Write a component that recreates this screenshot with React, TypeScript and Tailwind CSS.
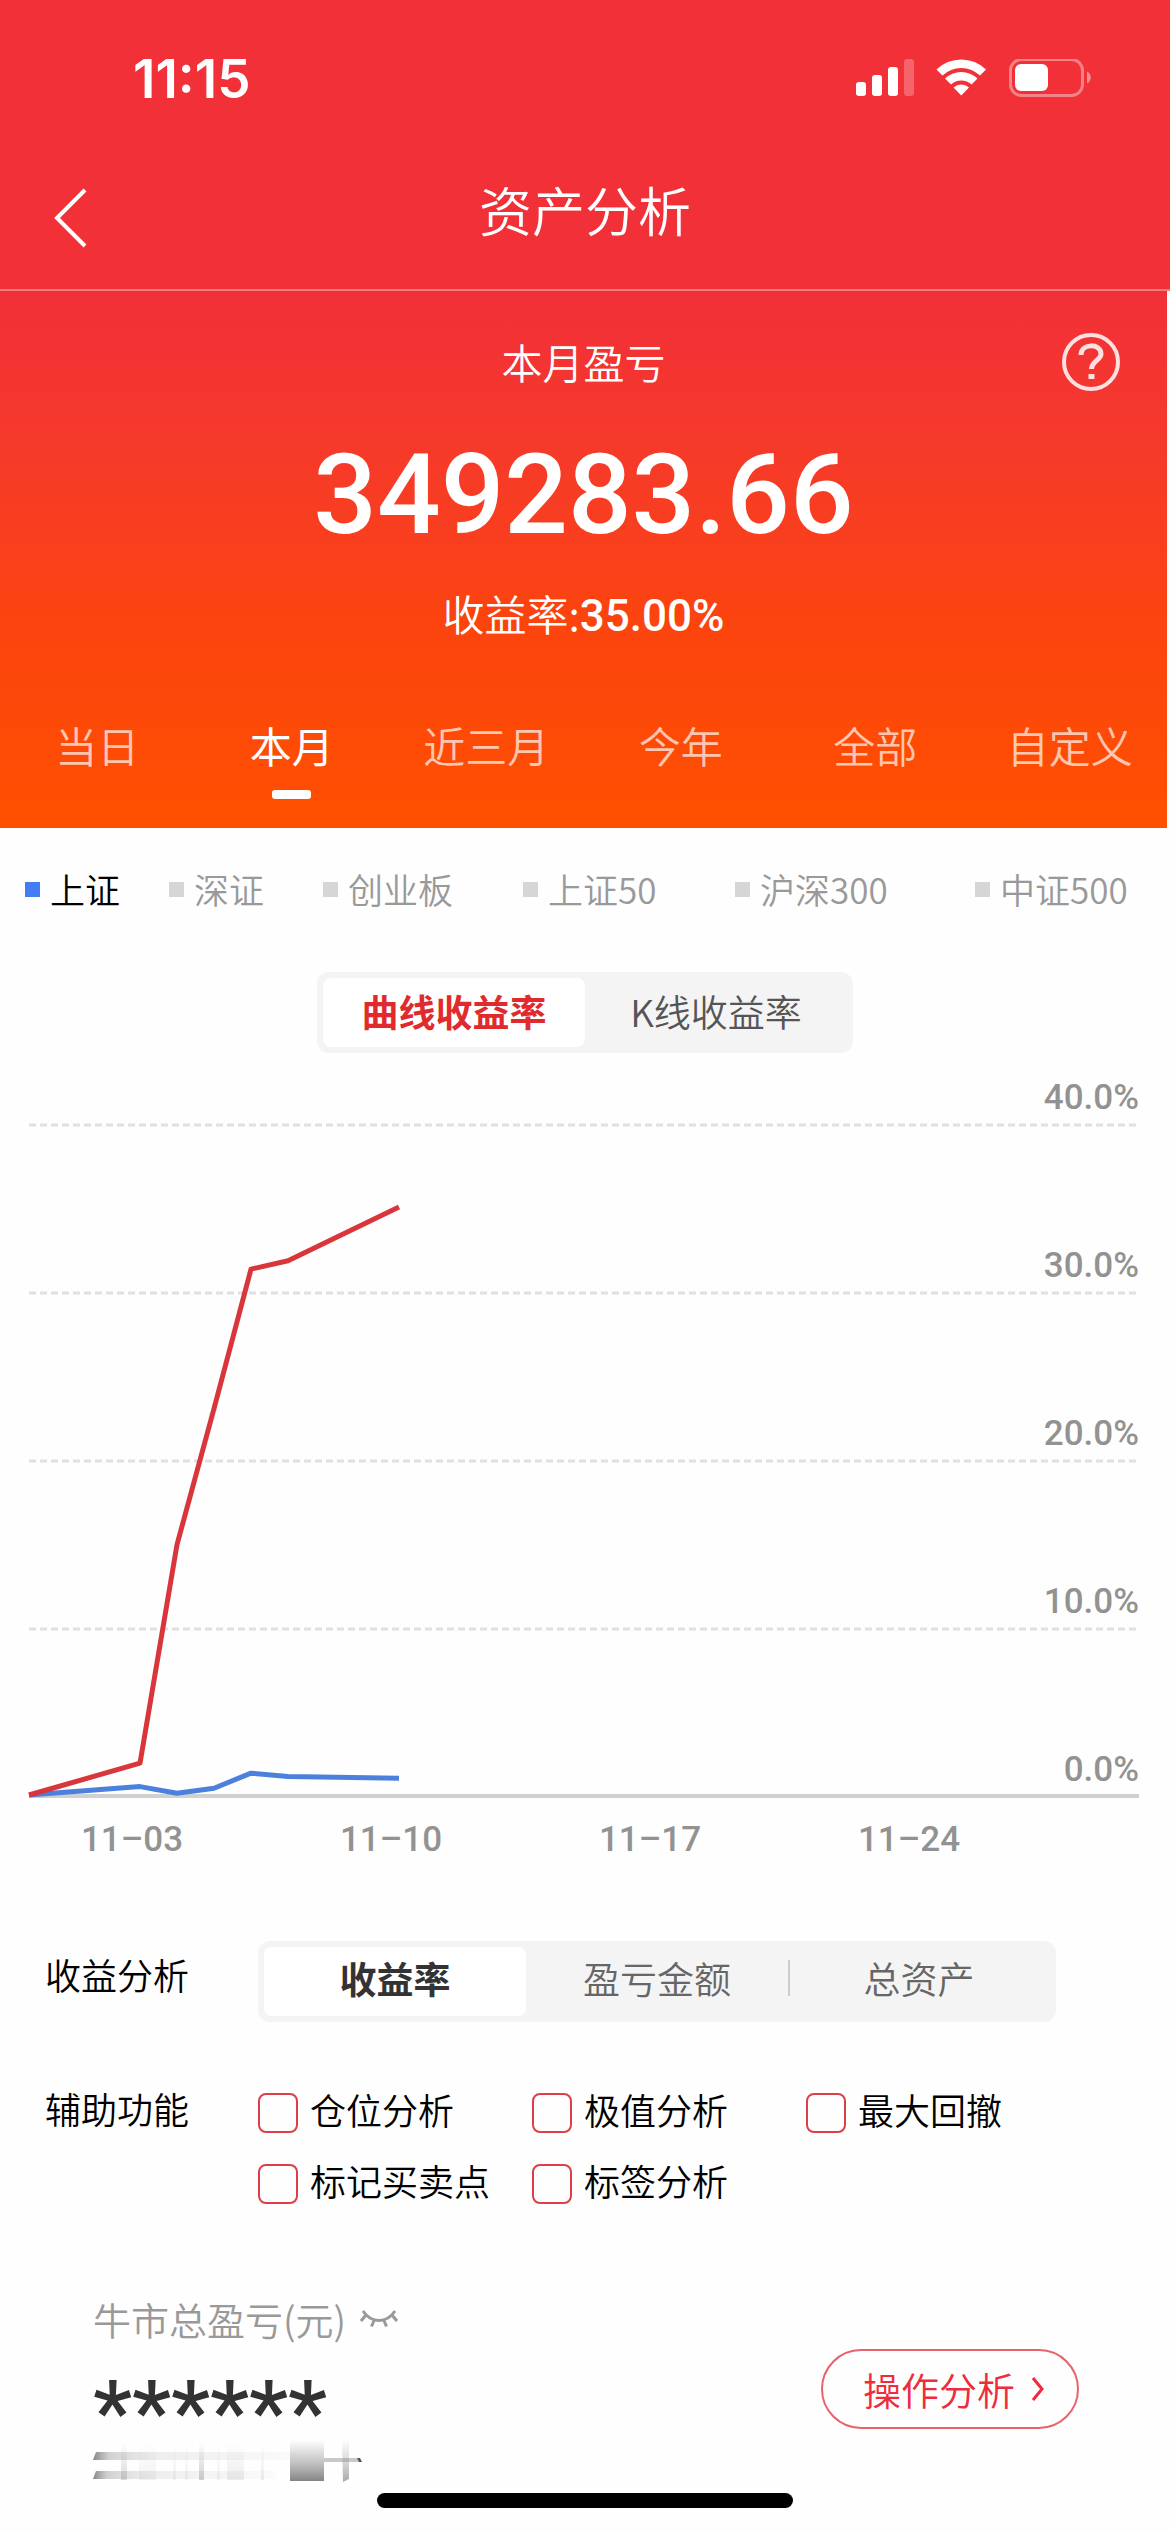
import { useState } from "react";

const PERIODS = ["当日", "本月", "近三月", "今年", "全部", "自定义"];
const INDEXES = ["上证", "深证", "创业板", "上证50", "沪深300", "中证500"];
const CURVE_MODES = ["曲线收益率", "K线收益率"];
const METRICS = ["收益率", "盈亏金额", "总资产"];
const HELPERS = ["仓位分析", "极值分析", "最大回撤", "标记买卖点", "标签分析"];

// [day of month, percent]
const PROFIT: [number, number][] = [[0, 0], [3, 1.9], [4, 14.9], [5, 23], [6, 31.3], [7, 31.8], [10, 35]];
const MARKET: [number, number][] = [[0, 0], [3, 0.5], [4, 0.1], [5, 0.4], [6, 1.3], [7, 1.1], [10, 1]];

const toX = (day: number) => 29 + day * 37;
const toY = (value: number) => 742 - value * 16.8;
const toPoints = (data: [number, number][]) => data.map(([d, v]) => `${toX(d)},${toY(v)}`).join(" ");

function StatusBar() {
  return (
    <div className="flex h-[135px] items-center justify-between pt-[22px] pr-[78px] pl-[133px]">
      <span className="font-[Inter,sans-serif] text-[53px] leading-[60px] font-semibold">11:15</span>
      <svg width="236" height="40" viewBox="0 0 236 40" fill="#fff">
        <rect x="0" y="23" width="10" height="14" rx="3" />
        <rect x="16" y="16" width="10" height="21" rx="3" />
        <rect x="32" y="8" width="10" height="29" rx="3" />
        <rect x="48" y="0" width="10" height="37" rx="3" opacity="0.25" />
        <path d="M80.500 10.500a35.500 35.500 0 0 1 49.500 0l-6 6a27 27 0 0 0-37.500 0z" />
        <path d="M89 19.500a23.500 23.500 0 0 1 32.500 0l-6 6a15 15 0 0 0-20.500 0z" />
        <path d="M97.500 28.500a11.500 11.500 0 0 1 15.500 0l-7.750 8z" />
        <rect x="154.500" y="0.500" width="72" height="36" rx="11" fill="none" stroke="#fff" strokeWidth="3" opacity="0.4" />
        <rect x="159" y="5" width="33" height="27" rx="6" />
        <path d="M231 12.500c5 2 5 10 0 12z" opacity="0.45" />
      </svg>
    </div>
  );
}

function EyeClosed() {
  return (
    <svg width="38" height="20" viewBox="0 0 38 20" fill="none" stroke="#999" strokeWidth="3">
      <path d="M3 2c8 12.500 24 12.500 32 0M6 6l-5 6M32 6l5 6M14.500 10.500l-3 7M23.500 10.500l3 7" />
    </svg>
  );
}

// Redacted line below the hidden total
function MaskedLine() {
  return (
    <svg width="272" height="44" viewBox="0 0 272 44" aria-hidden="true">
      <defs>
        <linearGradient id="fadeRight">
          <stop offset="0" stopColor="#777" stopOpacity="0.9" />
          <stop offset="0.080" stopColor="#999" stopOpacity="0.450" />
          <stop offset="0.300" stopColor="#bbb" stopOpacity="0.250" />
          <stop offset="1" stopColor="#bbb" stopOpacity="0.050" />
        </linearGradient>
        <linearGradient id="fadeDown" x1="0" y1="0" x2="0" y2="1">
          <stop offset="0" stopColor="#888" stopOpacity="0" />
          <stop offset="0.500" stopColor="#888" stopOpacity="0.450" />
          <stop offset="1" stopColor="#777" stopOpacity="0.9" />
        </linearGradient>
      </defs>
      <path d="M3 12h200v8H0z" fill="url(#fadeRight)" />
      <path d="M3 31h180v8H0z" fill="url(#fadeRight)" />
      <rect x="28" y="2" width="6" height="38" fill="url(#fadeDown)" opacity="0.300" />
      <rect x="46" y="2" width="17" height="38" fill="url(#fadeDown)" opacity="0.100" />
      <rect x="80" y="2" width="3" height="38" fill="url(#fadeDown)" opacity="0.100" />
      <rect x="92" y="2" width="3" height="38" fill="url(#fadeDown)" opacity="0.100" />
      <rect x="106" y="2" width="5" height="38" fill="url(#fadeDown)" opacity="0.400" />
      <rect x="124" y="2" width="3" height="38" fill="url(#fadeDown)" opacity="0.100" />
      <rect x="134" y="2" width="17" height="38" fill="url(#fadeDown)" opacity="0.150" />
      <rect x="168" y="2" width="3" height="38" fill="url(#fadeDown)" opacity="0.150" />
      <rect x="197" y="0" width="34" height="41" fill="url(#fadeDown)" />
      <path d="M249 0h7v39l-6 3z" fill="url(#fadeDown)" opacity="0.700" />
      <path d="M231 18h35l3 4h-38z" fill="#888" opacity="0.450" />
      <path d="M264 18h3l2 4h-3z" fill="#555" />
    </svg>
  );
}

function ReturnChart() {
  return (
    <svg viewBox="0 0 1170 817" className="block w-full font-[Roboto,sans-serif] text-[35px] font-medium" fill="none">
      {[40, 30, 20, 10].map((v) => (
        <line key={v} x1="29" x2="1139" y1={toY(v) + 2} y2={toY(v) + 2} stroke="#e0e0e0" strokeWidth="3" strokeDasharray="7 4" />
      ))}
      <line x1="29" x2="1139" y1="743" y2="743" stroke="#d0d0d0" strokeWidth="4" />
      {[40, 30, 20, 10, 0].map((v) => (
        <text key={v} x="1139" y={toY(v) - 14} textAnchor="end" fill="#929292">
          {v.toFixed(1)}%
        </text>
      ))}
      {["03", "10", "17", "24"].map((d) => (
        <text key={d} x={toX(Number(d)) - 8} y="798" textAnchor="middle" fill="#929292">
          11–{d}
        </text>
      ))}
      <polyline points={toPoints(MARKET)} stroke="#4b80dc" strokeWidth="5" strokeLinejoin="round" />
      <polyline points={toPoints(PROFIT)} stroke="#d9363c" strokeWidth="5" strokeLinejoin="round" />
    </svg>
  );
}

export default function App() {
  const [period, setPeriod] = useState("本月");
  const [index, setIndex] = useState("上证");
  const [mode, setMode] = useState("曲线收益率");
  const [metric, setMetric] = useState("收益率");

  return (
    <main className="min-h-screen bg-[#fefefe] font-['Noto_Sans_CJK_SC',sans-serif] font-[350] text-black">
      <header className="border-b-2 border-[#f5797e] bg-[#f13038] text-white">
        <StatusBar />
        <div className="grid h-[154px] grid-cols-[1fr_auto_1fr] items-center">
          <button type="button" aria-label="返回" className="ml-[50px] w-fit pt-3">
            <svg width="40" height="62" viewBox="0 0 40 62" fill="none" stroke="#fff" strokeWidth="4">
              <path d="M35 3L7 31l28 28" />
            </svg>
          </button>
          <h1 className="pb-1.5 text-[53px] leading-[60px]">资产分析</h1>
        </div>
      </header>

      <section className="mr-[3px] bg-linear-to-b from-[#f12f38] via-[#fb430f] via-60% to-[#ff5000] pt-10 pb-[29px] text-white">
        <div className="grid grid-cols-[1fr_auto_1fr] items-center">
          <h2 className="col-start-2 text-[41px] leading-[60px]">本月盈亏</h2>
          <button type="button" aria-label="说明" className="mr-[46px] justify-self-end">
            <svg width="60" height="60" viewBox="0 0 60 60" fill="none" stroke="#fff" strokeOpacity="0.850">
              <circle cx="30" cy="31" r="27" strokeWidth="4" />
              <path d="M20 24c0-12 20-12 20-1 0 6-9.500 7-9.500 15" strokeWidth="5" />
              <path d="M30.500 43v5" strokeWidth="6" />
            </svg>
          </button>
        </div>
        <p className="mt-11 text-center font-[Roboto,sans-serif] text-[112px] leading-[120px] font-medium">349283.66</p>
        <p className="mt-7 text-center text-[42px] leading-[60px]">
          收益率:<span className="font-[Roboto,sans-serif] text-[44px] leading-none font-medium">35.00%</span>
        </p>
        <nav className="mt-[72px] grid grid-cols-6">
          {PERIODS.map((p) => (
            <button
              key={p}
              type="button"
              onClick={() => setPeriod(p)}
              className={`flex flex-col items-center gap-[15px] text-[42px] leading-[60px] ${
                period === p ? "font-normal text-white" : "text-white/70"
              }`}
            >
              {p}
              <span className={`h-[9px] w-[39px] rounded-[3px] ${period === p ? "bg-white" : ""}`} />
            </button>
          ))}
        </nav>
      </section>

      <div className="mt-9 grid grid-cols-[144fr_154fr_200fr_212fr_240fr_195fr] pl-[25px]">
        {INDEXES.map((name) => (
          <button
            key={name}
            type="button"
            onClick={() => setIndex(name)}
            className={`flex items-center gap-[10px] text-[35px] leading-[50px] whitespace-nowrap ${
              index === name ? "text-black" : "text-[#999]"
            }`}
          >
            <span className={`size-[15px] ${index === name ? "bg-[#427df5]" : "bg-[#d6d6d6]"}`} />
            {name}
          </button>
        ))}
      </div>

      <div className="mx-auto mt-[58px] flex w-fit rounded-xl bg-[#f4f4f4] p-[6px]">
        {CURVE_MODES.map((m) => (
          <button
            key={m}
            type="button"
            onClick={() => setMode(m)}
            className={`h-[69px] w-[262px] rounded-lg pb-1 text-[37px] leading-[60px] ${
              mode === m ? "bg-white font-bold text-[#e12a2e]" : "text-[#555]"
            }`}
          >
            {m}
          </button>
        ))}
      </div>

      <ReturnChart />

      <div className="mt-[71px] grid grid-cols-[213px_1fr] items-center pl-[45px]">
        <span className="pb-4 text-[36px] leading-[50px]">收益分析</span>
        <div className="flex w-fit rounded-xl bg-[#f4f4f4] p-[6px]">
          {METRICS.map((m) => (
            <button
              key={m}
              type="button"
              onClick={() => setMetric(m)}
              className={`flex h-[69px] items-center rounded-lg pb-2 text-[37px] leading-[60px] ${
                metric === m ? "bg-white font-bold text-[#333]" : "text-[#666]"
              }`}
            >
              <span className="w-[262px]">{m}</span>
              {m === "盈亏金额" && <span className="-mr-[2px] h-9 w-[2px] bg-[#ccc]" />}
            </button>
          ))}
        </div>
      </div>

      <div className="mt-[66px] grid grid-cols-[213px_1fr] pl-[45px] text-[36px] leading-[50px]">
        <span className="-mt-[5px]">辅助功能</span>
        <div className="grid w-fit grid-cols-[274px_274px_274px] gap-y-[21px]">
          {HELPERS.map((h) => (
            <label key={h} className="flex h-[50px] items-center gap-3">
              <input type="checkbox" className="size-10 appearance-none rounded-lg border-2 border-[#dc4046] checked:bg-[#dc4046]" />
              <span className="-mt-2">{h}</span>
            </label>
          ))}
        </div>
      </div>

      <section className="mt-[85px] flex items-center justify-between pr-[91px] pl-[93px]">
        <div>
          <h2 className="flex items-center gap-[14px] text-[38px] leading-[50px] text-[#999]">
            牛市总盈亏(元)
            <EyeClosed />
          </h2>
          <p className="mt-[18px] h-[60px] font-[Roboto,sans-serif] text-[88px] leading-[100px] font-medium text-[#333]">******</p>
          <div className="mt-[18px]">
            <MaskedLine />
          </div>
        </div>
        <button
          type="button"
          className="flex h-20 w-[258px] items-center justify-center gap-4 rounded-full border-2 border-[#e8626c] pl-2 text-[38px] leading-[50px] text-[#ee2c3c]"
        >
          操作分析
          <svg width="14" height="26" viewBox="0 0 14 26" fill="none" stroke="#ee2c3c" strokeWidth="3">
            <path d="M2 2l9 11-9 11" />
          </svg>
        </button>
      </section>

      <footer className="pt-[9px] pb-6">
        <div className="mx-auto h-[15px] w-[416px] rounded-full bg-black" />
      </footer>
    </main>
  );
}
